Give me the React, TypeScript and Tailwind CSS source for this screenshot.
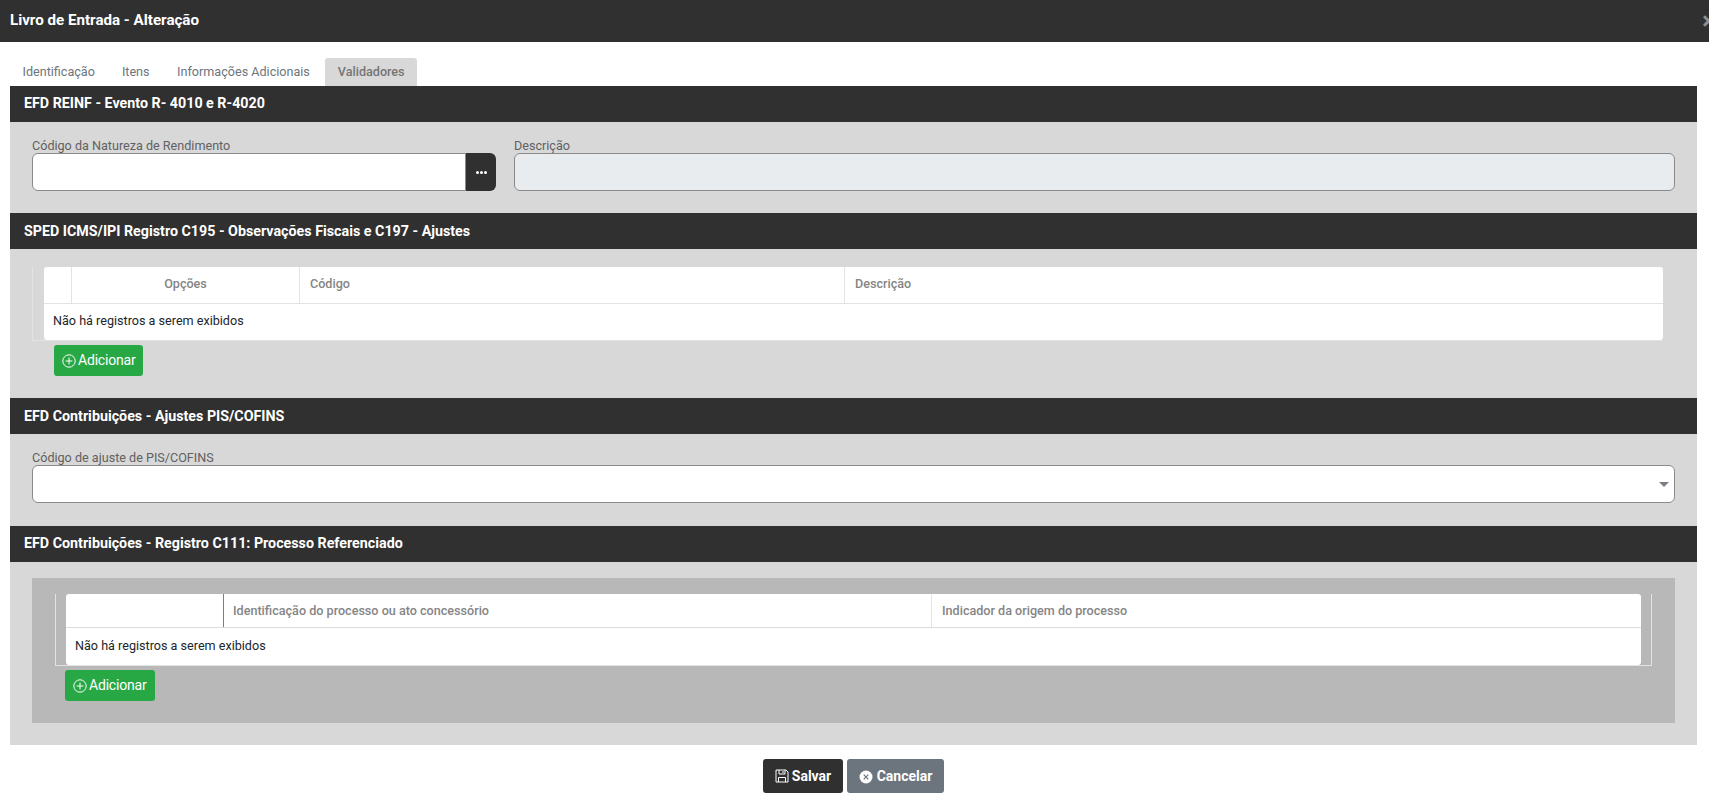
import React from "react";

function SectionHead({ children, low }: { children: React.ReactNode; low?: boolean }) {
  return (
    <div className={`h-9 bg-[#303030] pl-[14px] ${low ? "" : "pb-[1px]"} flex items-center text-white text-[14.27px] font-bold leading-none`}>
      {children}
    </div>
  );
}

function AddButton({ narrow }: { narrow?: boolean }) {
  return (
    <button className={`${narrow ? "w-[89px]" : "w-[90px]"} h-[31px] rounded-[3px] bg-[#28a745] text-white text-[14px] flex items-center pl-2 gap-[2px] tracking-[-0.2px]`}>
      <svg width="14" height="14" viewBox="0 0 14 14" fill="none" stroke="white" strokeWidth="1" className="mt-[1px]">
        <circle cx="7" cy="7" r="6.2" />
        <path d="M7 3.6v6.8M3.6 7h6.8" />
      </svg>
      <span className="mb-[1px]">Adicionar</span>
    </button>
  );
}

function EmptyRow() {
  return <div className="text-[12.6px] text-[#212529] leading-none">Não há registros a serem exibidos</div>;
}

export default function App() {
  return (
    <div className="h-[802px] w-[1709px] overflow-hidden bg-white font-['Roboto',sans-serif]">
      <div className="h-[42px] bg-[#303030] pl-[10px] flex items-center justify-between text-white">
        <span className="text-[15.15px] font-bold mt-[-2px]">Livro de Entrada - Alteração</span>
        <span className="text-[#8f8f8f] text-[24px] font-bold leading-none mr-[-6px] mt-[-1px]">×</span>
      </div>

      <div className="h-[44px] pt-4 pl-[9px] flex text-[12.6px] text-[#6c757d]">
        <div className="h-7 px-[13.5px] flex items-center">Identificação</div>
        <div className="h-7 px-[13.5px] flex items-center">Itens</div>
        <div className="h-7 pl-[14px] pr-[13.5px] flex items-center">Informações Adicionais</div>
        <div className="h-7 ml-[1.5px] pl-[13px] pr-[12px] flex items-center bg-[#d8d8d8] rounded-t-[3px] font-medium text-[#757575]">Validadores</div>
      </div>

      <div className="ml-[10px] w-[1687px]">
        <SectionHead>EFD REINF - Evento R- 4010 e R-4020</SectionHead>
        <div className="h-[91px] bg-[#d8d8d8] px-[22px] pt-[16px] flex gap-[18px]">
          <div className="w-[464px]">
            <div className="text-[12.6px] leading-[15px] text-[#616161]">Código da Natureza de Rendimento</div>
            <div className="flex h-[38px]">
              <div className="flex-1 bg-white border border-[#8a8a8a] rounded-l-[6px]" />
              <div className="w-[30px] bg-[#303030] rounded-r-[6px] flex items-center justify-center gap-[1px]">
                <span className="w-[3px] h-[3px] rounded-full bg-white" />
                <span className="w-[3px] h-[3px] rounded-full bg-white" />
                <span className="w-[3px] h-[3px] rounded-full bg-white" />
              </div>
            </div>
          </div>
          <div className="flex-1">
            <div className="text-[12.6px] leading-[15px] text-[#616161]">Descrição</div>
            <div className="h-[38px] bg-[#e9ecef] border border-[#8a8a8a] rounded-[6px]" />
          </div>
        </div>

        <SectionHead low>SPED ICMS/IPI Registro C195 - Observações Fiscais e C197 - Ajustes</SectionHead>
        <div className="h-[149px] bg-[#d8d8d8] px-[22px] pt-[18px]">
          <div className="w-[1631px] h-[74px] border-l border-b border-[#e3e3e3] pl-[11px]">
            <div className="h-full bg-white rounded-[3px] text-[12.6px]">
              <div className="h-[37px] grid grid-cols-[28px_228px_545px_1fr] border-b border-[#e3e3e3] font-medium text-[#858585]">
                <div className="border-r border-[#e3e3e3]" />
                <div className="border-r border-[#e3e3e3] flex items-center justify-center pb-[1px]">Opções</div>
                <div className="border-r border-[#e3e3e3] flex items-center pl-[10px] pb-[1px]">Código</div>
                <div className="flex items-center pl-[10px] pb-[1px]">Descrição</div>
              </div>
              <div className="h-[36px] flex items-center pl-[9px] pb-[1px]"><EmptyRow /></div>
            </div>
          </div>
          <div className="mt-[4px] ml-[22px]"><AddButton narrow /></div>
        </div>

        <SectionHead low>EFD Contribuições - Ajustes PIS/COFINS</SectionHead>
        <div className="h-[92px] bg-[#d8d8d8] px-[22px] pt-[16px]">
          <div className="text-[12.6px] leading-[15px] text-[#616161]">Código de ajuste de PIS/COFINS</div>
          <div className="h-[38px] bg-white border border-[#8a8a8a] rounded-[6px] flex items-center justify-end pr-[5px]">
            <span className="w-0 h-0 border-x-[5px] border-x-transparent border-t-[5px] border-t-[#7a7f85]" />
          </div>
        </div>

        <SectionHead>EFD Contribuições - Registro C111: Processo Referenciado</SectionHead>
        <div className="h-[183px] bg-[#d8d8d8] px-[22px] pt-[16px]">
          <div className="h-[145px] bg-[#b8b8b8] px-[23px] pt-[16px]">
            <div className="w-[1597px] h-[72px] border-x border-b border-[#e3e3e3] pl-[10px] pr-[10px]">
              <div className="h-full bg-white rounded-[3px] text-[12.6px]">
                <div className="h-[34px] grid grid-cols-[158px_708px_1fr] border-b border-[#dcdcdc] font-medium text-[#858585]">
                  <div className="border-r border-[#7d7d7d]" />
                  <div className="border-r border-[#e3e3e3] flex items-center pl-[9px] pt-[1px]">Identificação do processo ou ato concessório</div>
                  <div className="flex items-center pl-[10px] pt-[1px]">Indicador da origem do processo</div>
                </div>
                <div className="h-[36px] flex items-center pl-[9px]"><EmptyRow /></div>
              </div>
            </div>
            <div className="mt-[4px] ml-[10px]"><AddButton /></div>
          </div>
        </div>
      </div>

      <div className="mt-[14px] flex justify-center gap-[4px] text-[14px] font-bold text-white">
        <button className="w-[80px] h-[34px] rounded-[3px] bg-[#303030] flex items-center justify-center gap-[3px] ml-[-2px]">
          <svg width="14" height="14" viewBox="0 0 14 14" fill="none" stroke="white" strokeWidth="1">
            <path d="M1 1h10l2 2v10H1z" />
            <path d="M4 1v4h6V1M3.5 13V8.5h7V13M8 2v2" />
          </svg>
          <span>Salvar</span>
        </button>
        <button className="w-[97px] h-[34px] rounded-[3px] bg-[#6c757d] flex items-center justify-center gap-[4px]">
          <svg width="14" height="14" viewBox="0 0 14 14" className="mt-[1px]">
            <circle cx="7" cy="7" r="6.5" fill="white" />
            <path d="M4.7 4.7l4.6 4.6M9.3 4.7l-4.6 4.6" stroke="#6c757d" strokeWidth="1.2" />
          </svg>
          <span>Cancelar</span>
        </button>
      </div>
    </div>
  );
}
